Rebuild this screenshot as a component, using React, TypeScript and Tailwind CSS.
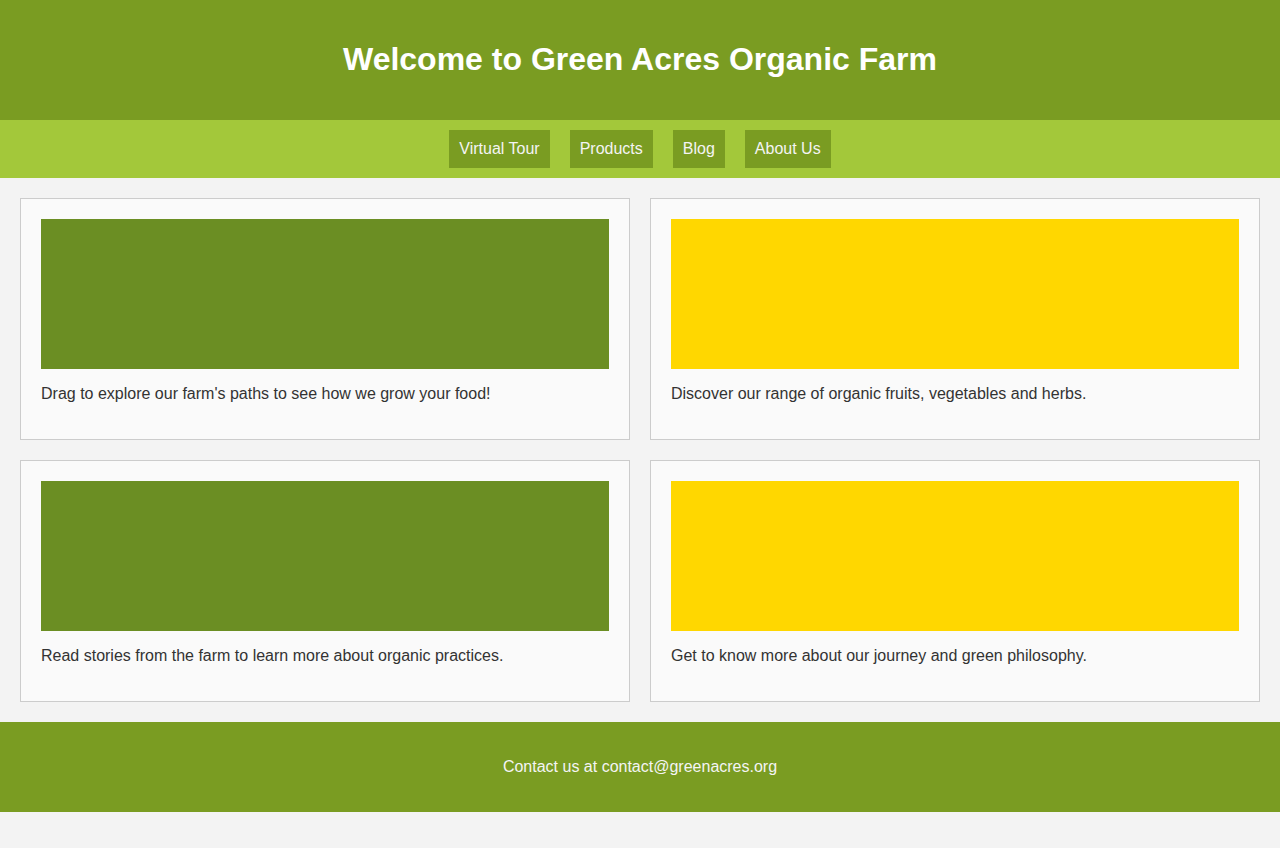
export default function App() {
  const cards = [
    { color: "bg-[#6b8e23]", text: "Drag to explore our farm's paths to see how we grow your food!" },
    { color: "bg-[#ffd700]", text: "Discover our range of organic fruits, vegetables and herbs." },
    { color: "bg-[#6b8e23]", text: "Read stories from the farm to learn more about organic practices." },
    { color: "bg-[#ffd700]", text: "Get to know more about our journey and green philosophy." },
  ];
  const nav = ["Virtual Tour", "Products", "Blog", "About Us"];
  return (
    <div className="min-h-[848px] bg-[#f3f3f3] font-['Liberation_Sans',Arial,sans-serif] text-[#333]">
      <header className="h-[120px] bg-[#7a9c22] flex items-center justify-center pb-[2px]">
        <h1 className="text-[32px] font-bold text-white leading-[37px]">Welcome to Green Acres Organic Farm</h1>
      </header>
      <nav className="h-[58px] bg-[#a3c83a] flex items-center justify-center gap-5">
        {nav.map((n) => (
          <a key={n} className="bg-[#7a9c22] text-[#f4f4f4] text-[16px] leading-[18px] px-[10px] py-[10px]">
            {n}
          </a>
        ))}
      </nav>
      <main className="p-5 grid grid-cols-2 gap-5">
        {cards.map((c, i) => (
          <div key={i} className="bg-[#fafafa] border border-[#cccccc] p-5">
            <div className={`h-[150px] ${c.color}`} />
            <p className="my-4 text-[16px] leading-[18px]">{c.text}</p>
          </div>
        ))}
      </main>
      <footer className="h-[90px] bg-[#7a9c22] flex items-center justify-center">
        <p className="text-[16px] text-[#f4f4f4] leading-[18px]">Contact us at contact@greenacres.org</p>
      </footer>
    </div>
  );
}
